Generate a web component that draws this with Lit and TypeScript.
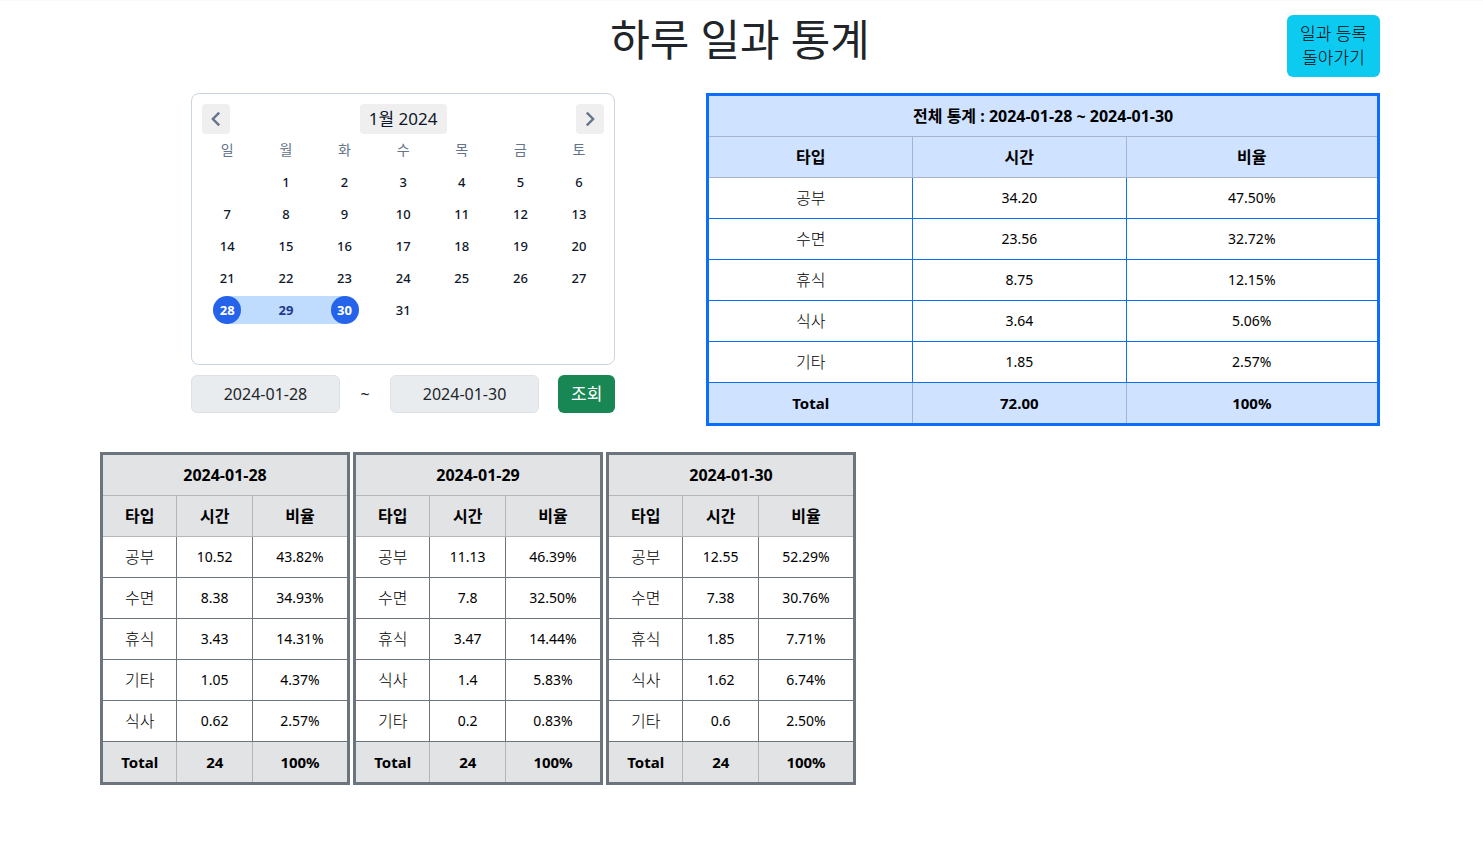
import { LitElement, html, css } from "lit";
import { customElement, property } from "lit/decorators.js";
import { classMap } from "lit/directives/class-map.js";

type Row = [type: string, hours: string, ratio: string];

@customElement("stat-table")
class StatTable extends LitElement {
  @property() heading = "";
  @property() total = "";
  @property({ attribute: false }) rows: Row[] = [];

  static styles = css`
    :host {
      display: block;
      --line: #6c757d;
      --soft-line: #b5b6b7;
      --tint: #e2e3e5;
      --time-width: 31%;
    }
    :host([tone="primary"]) {
      --line: #0d6efd;
      --soft-line: #a6b5cc;
      --tint: #cfe2ff;
      --time-width: 32%;
    }
    table {
      box-sizing: border-box;
      width: 100%;
      table-layout: fixed;
      border: 3px solid var(--line);
      border-spacing: 0;
      color: #000;
      text-align: center;
    }
    .type {
      width: 30.5%;
    }
    .time {
      width: var(--time-width);
    }
    th, td {
      box-sizing: border-box;
      height: 41px;
      padding: 0;
      border-right: 1px solid var(--line);
      border-bottom: 1px solid var(--line);
      font-size: 14px;
      line-height: 24px;
    }
    tr > :last-child {
      border-right: 0;
    }
    thead th, tfoot th, tfoot td {
      background: var(--tint);
      border-color: var(--soft-line);
      font-weight: 700;
      font-size: 15px;
    }
    thead th {
      font-size: 16px;
    }
    tbody th {
      font-size: 16px;
      font-weight: 300;
    }
    tfoot th, tfoot td {
      height: 40px;
      border-bottom: 0;
    }
  `;

  render() {
    return html`
      <table>
        <colgroup><col class="type" /><col class="time" /><col /></colgroup>
        <thead>
          <tr><th colspan="3">${this.heading}</th></tr>
          <tr><th scope="col">타입</th><th scope="col">시간</th><th scope="col">비율</th></tr>
        </thead>
        <tbody>
          ${this.rows.map(
            ([type, hours, ratio]) => html`<tr><th scope="row">${type}</th><td>${hours}</td><td>${ratio}</td></tr>`
          )}
        </tbody>
        <tfoot>
          <tr><th scope="row">Total</th><td>${this.total}</td><td>100%</td></tr>
        </tfoot>
      </table>
    `;
  }
}

@customElement("range-calendar")
class RangeCalendar extends LitElement {
  @property({ type: Number }) from = 28;
  @property({ type: Number }) to = 30;

  static styles = css`
    :host {
      display: block;
      box-sizing: border-box;
      padding: 10px 6px 40px;
      border: 1px solid #cbd5e1;
      border-radius: 8px;
    }
    button {
      border: 0;
      padding: 0;
      font: inherit;
      cursor: pointer;
    }
    .bar {
      display: flex;
      justify-content: space-between;
      padding: 0 4px;
    }
    .bar button {
      height: 30px;
      border-radius: 4px;
      background: #efefef;
      color: #0f172a;
    }
    .bar .step {
      display: grid;
      place-items: center;
      width: 28px;
      color: #64748b;
    }
    .bar .month {
      padding: 0 9px;
      font-size: 17px;
      line-height: 30px;
    }
    .grid {
      display: grid;
      grid-template-columns: repeat(7, 1fr);
      row-gap: 4px;
      padding-top: 2px;
      text-align: center;
    }
    .weekday {
      font-size: 14px;
      line-height: 28px;
      color: #64748b;
    }
    .cell {
      display: grid;
      justify-items: center;
    }
    .day {
      width: 28px;
      height: 28px;
      border-radius: 50%;
      background: none;
      color: #0f172a;
      font-size: 13px;
      font-weight: 500;
    }
    .within {
      background: #bfdbfe;
    }
    .first {
      background: linear-gradient(to right, transparent 50%, #bfdbfe 50%);
    }
    .last {
      background: linear-gradient(to left, transparent 50%, #bfdbfe 50%);
    }
    .within .day {
      color: #1e3a8a;
      font-weight: 700;
    }
    .first .day, .last .day {
      background: #2563eb;
      color: #fff;
      font-weight: 700;
    }
  `;

  render() {
    const days = Array.from({ length: 31 }, (_, i) => i + 1);
    return html`
      <div class="bar">
        <button class="step" aria-label="이전 달">
          <svg width="20" height="20" viewBox="0 0 20 20" fill="none" stroke="currentColor" stroke-width="2.4"><path d="M13.2 3.7 6.9 10l6.3 6.3" /></svg>
        </button>
        <button class="month">1월 2024</button>
        <button class="step" aria-label="다음 달">
          <svg width="20" height="20" viewBox="0 0 20 20" fill="none" stroke="currentColor" stroke-width="2.4"><path d="M6.8 3.7 13.1 10l-6.3 6.3" /></svg>
        </button>
      </div>
      <div class="grid">
        ${[..."일월화수목금토"].map((d) => html`<div class="weekday">${d}</div>`)}
        <div></div>
        ${days.map(
          (d) => html`<div
            class=${classMap({
              cell: true,
              first: d === this.from,
              within: d > this.from && d < this.to,
              last: d === this.to,
            })}
          ><button class="day">${d}</button></div>`
        )}
      </div>
    `;
  }
}

@customElement("app-root")
class AppRoot extends LitElement {
  static styles = css`
    :host {
      display: block;
      padding: 14px 103px 56px 100px;
      border-top: 1px solid #fafafa;
      background: #fff;
      color: #212529;
      font-family: "Noto Sans", "Noto Sans CJK KR", sans-serif;
      font-size: 16px;
      line-height: 24px;
    }
    header {
      display: grid;
      grid-template-columns: 1fr auto 1fr;
      align-items: start;
      margin-bottom: 16px;
    }
    h1 {
      grid-column: 2;
      margin: 0;
      font-size: 43px;
      line-height: 50px;
      font-weight: 400;
    }
    button, input {
      box-sizing: border-box;
      border-radius: 6px;
      font: inherit;
    }
    .back, .search {
      padding: 7px 13px;
      border: 0;
      font-size: 17px;
      font-weight: 300;
      cursor: pointer;
    }
    .back {
      justify-self: end;
      background: #0dcaf0;
      color: #000;
    }
    .overview {
      display: grid;
      grid-template-columns: 9fr 10fr;
      align-items: start;
      margin-bottom: 26px;
    }
    .picker {
      width: 70%;
      margin: 0 auto;
    }
    .range {
      display: grid;
      grid-template-columns: 1fr 50px 1fr auto;
      align-items: center;
      margin-top: 10px;
      text-align: center;
    }
    .range input {
      width: 100%;
      min-width: 0;
      height: 38px;
      padding: 0 12px;
      border: 1px solid #dee2e6;
      background: #e9ecef;
      color: #212529;
      text-align: center;
    }
    .search {
      margin-left: 19px;
      background: #198754;
      color: #fff;
      font-weight: 400;
    }
    .daily {
      display: grid;
      grid-template-columns: repeat(auto-fill, 250px);
      gap: 3px;
    }
  `;

  private overall: Row[] = [
    ["공부", "34.20", "47.50%"],
    ["수면", "23.56", "32.72%"],
    ["휴식", "8.75", "12.15%"],
    ["식사", "3.64", "5.06%"],
    ["기타", "1.85", "2.57%"],
  ];

  private days: { date: string; rows: Row[] }[] = [
    {
      date: "2024-01-28",
      rows: [
        ["공부", "10.52", "43.82%"],
        ["수면", "8.38", "34.93%"],
        ["휴식", "3.43", "14.31%"],
        ["기타", "1.05", "4.37%"],
        ["식사", "0.62", "2.57%"],
      ],
    },
    {
      date: "2024-01-29",
      rows: [
        ["공부", "11.13", "46.39%"],
        ["수면", "7.8", "32.50%"],
        ["휴식", "3.47", "14.44%"],
        ["식사", "1.4", "5.83%"],
        ["기타", "0.2", "0.83%"],
      ],
    },
    {
      date: "2024-01-30",
      rows: [
        ["공부", "12.55", "52.29%"],
        ["수면", "7.38", "30.76%"],
        ["휴식", "1.85", "7.71%"],
        ["식사", "1.62", "6.74%"],
        ["기타", "0.6", "2.50%"],
      ],
    },
  ];

  render() {
    return html`
      <header>
        <h1>하루 일과 통계</h1>
        <button class="back">일과 등록<br />돌아가기</button>
      </header>
      <section class="overview">
        <div class="picker">
          <range-calendar></range-calendar>
          <div class="range">
            <input aria-label="시작일" readonly .value=${"2024-01-28"} />
            <span>~</span>
            <input aria-label="종료일" readonly .value=${"2024-01-30"} />
            <button class="search">조회</button>
          </div>
        </div>
        <stat-table
          tone="primary"
          heading="전체 통계 : 2024-01-28 ~ 2024-01-30"
          total="72.00"
          .rows=${this.overall}
        ></stat-table>
      </section>
      <section class="daily">
        ${this.days.map(
          (d) => html`<stat-table heading=${d.date} total="24" .rows=${d.rows}></stat-table>`
        )}
      </section>
    `;
  }
}
